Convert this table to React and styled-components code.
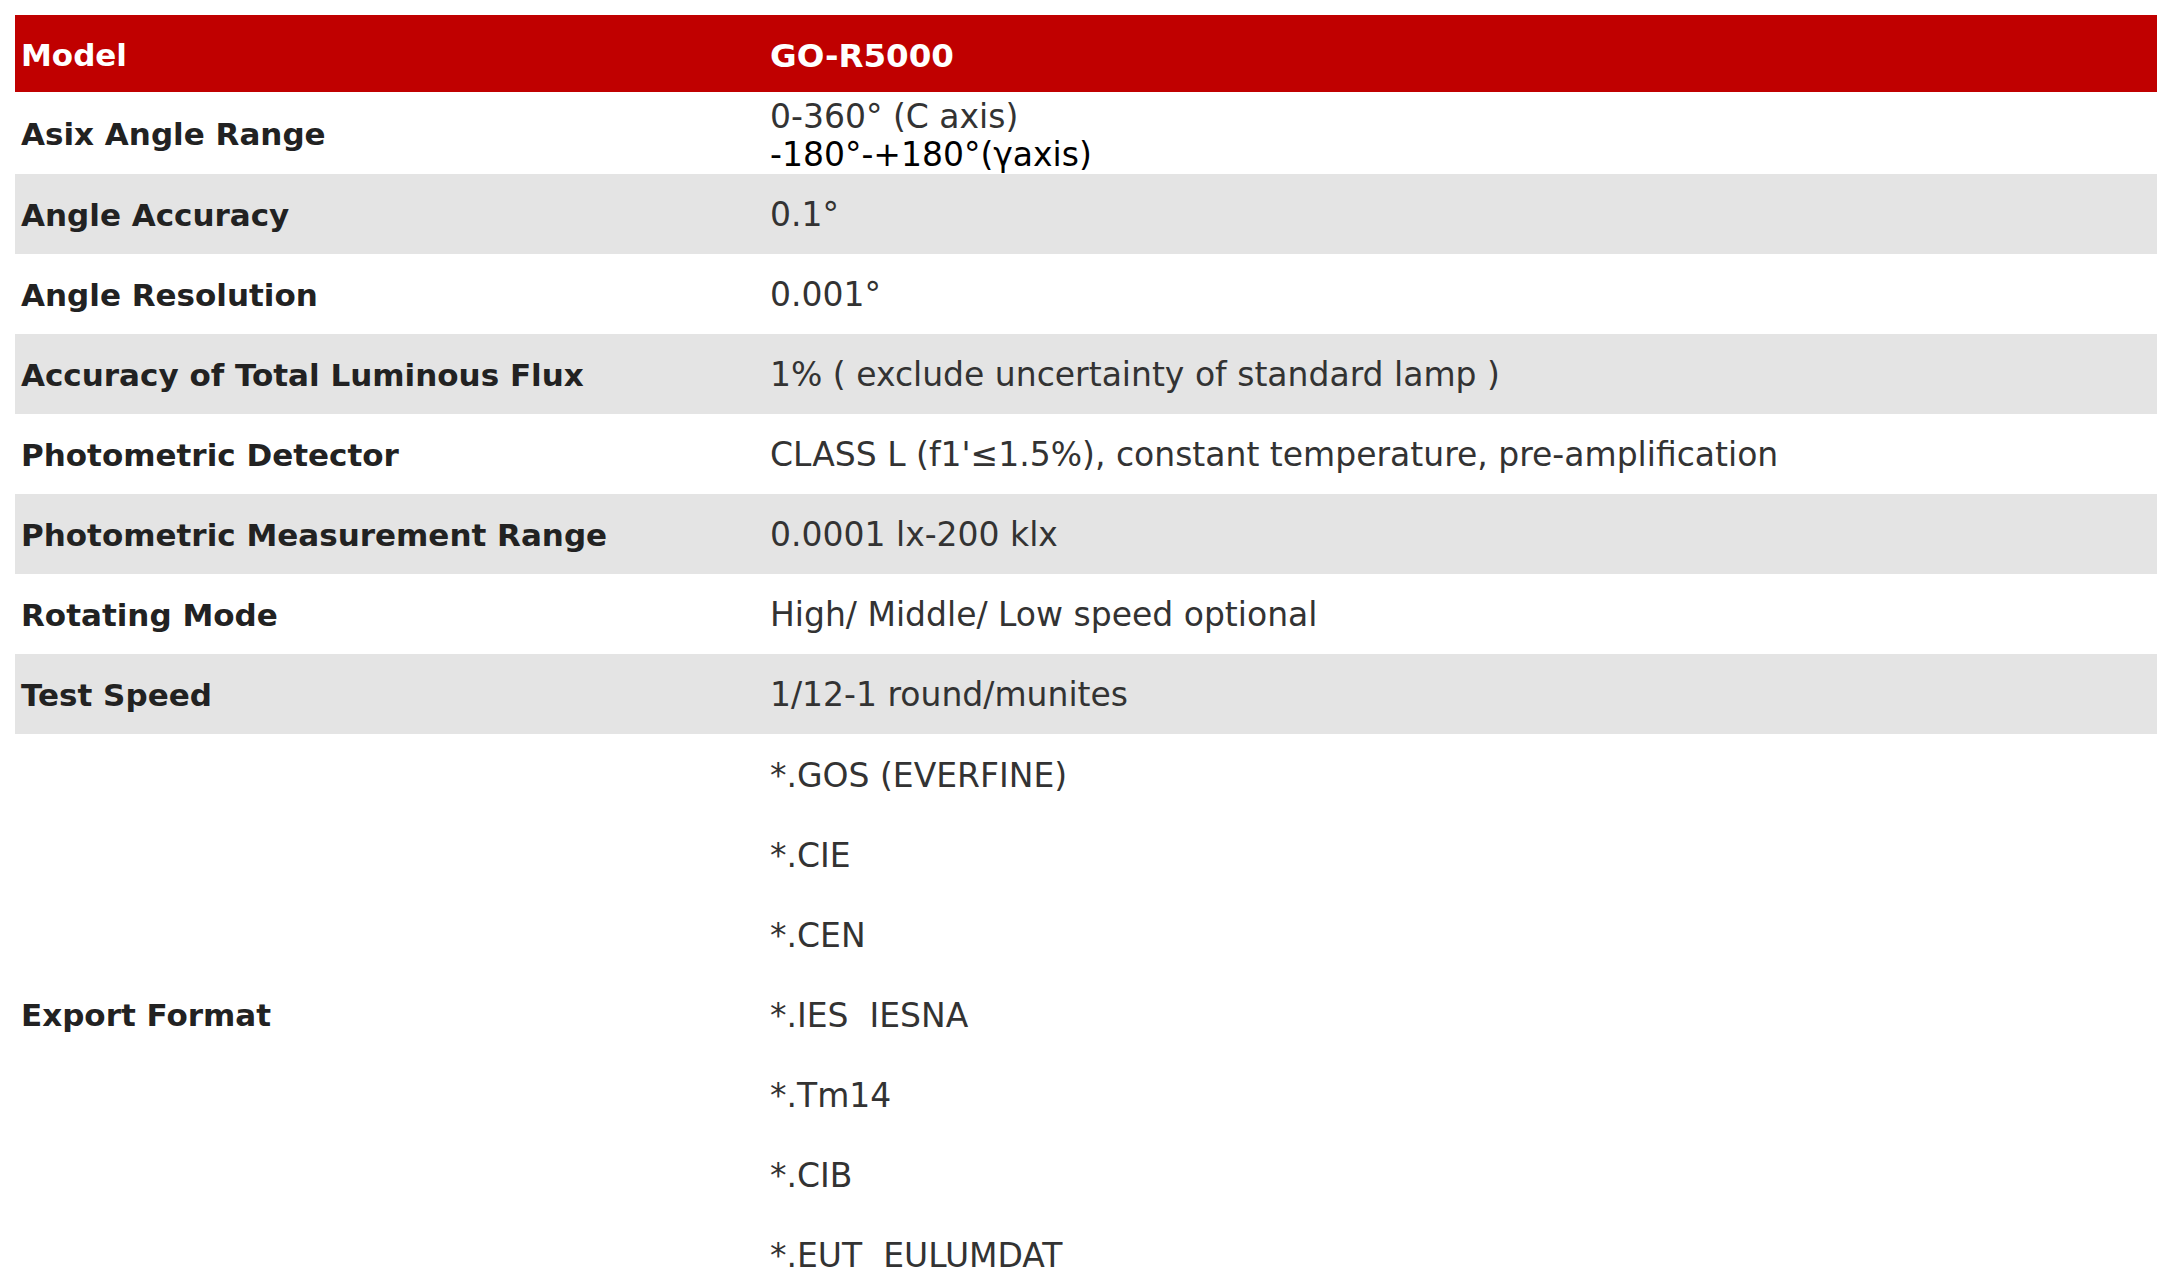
import React from "react";
import styled, { createGlobalStyle } from "styled-components";

const GlobalStyle = createGlobalStyle`
  html, body {
    margin: 0;
    padding: 0;
    background: #ffffff;
  }
  body {
    padding: 15px;
    font-family: "DejaVu Sans", Verdana, sans-serif;
  }
`;

const Table = styled.div`
  display: flex;
  flex-direction: column;
  width: 100%;
`;

const Row = styled.div`
  display: grid;
  grid-template-columns: 749px 1fr;
  min-height: ${(p) => (p.$header ? "77px" : "80px")};
  background: ${(p) => (p.$header ? "#c00000" : p.$shade ? "#e4e4e4" : "#ffffff")};
`;

const Label = styled.div`
  display: flex;
  align-items: center;
  padding: ${(p) => (p.$header ? "10px 6px 6px" : "9px 6px 7px")};
  font-size: 31px;
  font-weight: 700;
  line-height: 33px;
  color: ${(p) => (p.$header ? "#ffffff" : "#222222")};
`;

const Value = styled.div`
  display: flex;
  flex-direction: column;
  justify-content: center;
  padding: ${(p) =>
    p.$list ? "0 6px" : p.$tight ? "6px 6px 0" : p.$header ? "10px 6px 6px" : "9px 6px 7px"};
  font-size: ${(p) => (p.$header ? "32.5px" : "33px")};
  font-weight: ${(p) => (p.$header ? 700 : 400)};
  line-height: ${(p) => (p.$tight ? "38px" : "34px")};
  color: ${(p) => (p.$header ? "#ffffff" : "#333333")};
  white-space: pre-wrap;
`;

const Line = styled.span`
  display: block;
  color: ${(p) => (p.$dark ? "#000000" : "inherit")};
`;

const ListItem = styled.div`
  box-sizing: border-box;
  display: flex;
  align-items: center;
  height: 80px;
  padding-top: 4px;
`;

const rows = [
  { label: "Angle Accuracy", value: "0.1°" },
  { label: "Angle Resolution", value: "0.001°" },
  { label: "Accuracy of Total Luminous Flux", value: "1% ( exclude uncertainty of standard lamp )" },
  { label: "Photometric Detector", value: "CLASS L (f1'≤1.5%), constant temperature, pre-amplification" },
  { label: "Photometric Measurement Range", value: "0.0001 lx-200 klx" },
  { label: "Rotating Mode", value: "High/ Middle/ Low speed optional" },
  { label: "Test Speed", value: "1/12-1 round/munites" },
];

const formats = [
  "*.GOS (EVERFINE)",
  "*.CIE",
  "*.CEN",
  "*.IES  IESNA",
  "*.Tm14",
  "*.CIB",
  "*.EUT  EULUMDAT",
];

export default function App() {
  return (
    <>
      <GlobalStyle />
      <Table>
        <Row $header>
          <Label $header>Model</Label>
          <Value $header>GO-R5000</Value>
        </Row>
        <Row>
          <Label>Asix Angle Range</Label>
          <Value $tight>
            <Line>0-360° (C axis)</Line>
            <Line $dark>-180°-+180°(γaxis)</Line>
          </Value>
        </Row>
        {rows.map((r, i) => (
          <Row key={r.label} $shade={i % 2 === 0}>
            <Label>{r.label}</Label>
            <Value>{r.value}</Value>
          </Row>
        ))}
        <Row>
          <Label>Export Format</Label>
          <Value $list>
            {formats.map((f) => (
              <ListItem key={f}>{f}</ListItem>
            ))}
          </Value>
        </Row>
      </Table>
    </>
  );
}
